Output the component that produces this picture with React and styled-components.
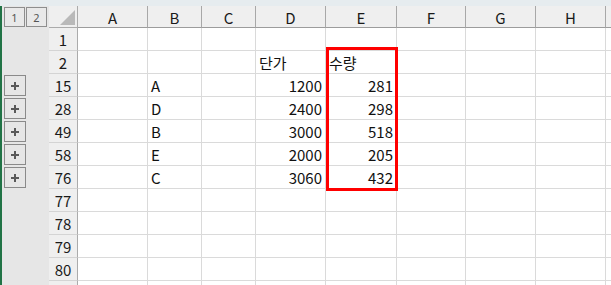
import React from "react";
import styled, { createGlobalStyle } from "styled-components";

const GlobalStyle = createGlobalStyle`
  html, body {
    margin: 0;
    padding: 0;
    background: #ffffff;
    overflow: hidden;
  }
  body {
    font-family: "Noto Sans CJK KR", "Noto Sans", sans-serif;
  }
`;

const COLS = ["A", "B", "C", "D", "E", "F", "G", "H", ""];
const WIDTHS = "29px 70px 54px 54px 70px 71px 69px 70px 70px 1fr";

// row 81 only peeks in at the bottom edge, its number is not visible
const ROWS = [
  { n: 1 },
  { n: 2, D: "단가", E: "수량" },
  { n: 15, B: "A", D: 1200, E: 281, folded: true },
  { n: 28, B: "D", D: 2400, E: 298, folded: true },
  { n: 49, B: "B", D: 3000, E: 518, folded: true },
  { n: 58, B: "E", D: 2000, E: 205, folded: true },
  { n: 76, B: "C", D: 3060, E: 432, folded: true },
  { n: 77 },
  { n: 78 },
  { n: 79 },
  { n: 80 },
  { n: 81, hidden: true },
];

const PlusIcon = () => (
  <svg width="8" height="8" viewBox="0 0 8 8">
    <path d="M4 0v8M0 4h8" stroke="#595959" strokeWidth="2" />
  </svg>
);

export default function App() {
  return (
    <>
      <GlobalStyle />
      <Window>
        <TopStrip />
        <Body>
          <Outline>
            <LevelBar>
              <LevelButton>1</LevelButton>
              <LevelButton>2</LevelButton>
            </LevelBar>
            {ROWS.map((r) => (
              <OutlineSlot key={r.n}>
                {r.folded && (
                  <ExpandButton>
                    <PlusIcon />
                  </ExpandButton>
                )}
              </OutlineSlot>
            ))}
          </Outline>
          <Sheet>
            <Grid>
              <Corner>
                <CornerMark />
              </Corner>
              {COLS.map((c, i) => (
                <ColHead key={i} $last={c === ""}>
                  {c}
                </ColHead>
              ))}
              {ROWS.map((r) => (
                <React.Fragment key={r.n}>
                  <RowHead>{r.hidden ? null : r.n}</RowHead>
                  {COLS.map((c, i) => {
                    const v = r[c];
                    return (
                      <Cell key={i} $num={typeof v === "number"}>
                        {v}
                      </Cell>
                    );
                  })}
                </React.Fragment>
              ))}
            </Grid>
            <Highlight />
          </Sheet>
        </Body>
      </Window>
    </>
  );
}

const Window = styled.div`
  width: 611px;
  height: 285px;
  display: flex;
  flex-direction: column;
  overflow: hidden;
  background: #ffffff;
`;

const TopStrip = styled.div`
  height: 6px;
  flex: none;
  background: #e6ecef;
`;

const Body = styled.div`
  display: flex;
  flex: 1;
  min-height: 0;
`;

const Outline = styled.div`
  width: 47px;
  flex: none;
  background: #e6e6e6;
  border-left: 2px solid #217346;
  display: flex;
  flex-direction: column;
`;

const LevelBar = styled.div`
  height: 22px;
  flex: none;
  display: flex;
  align-items: flex-start;
  padding: 1px 0 0 2px;
  box-sizing: border-box;
`;

const LevelButton = styled.div`
  width: 21px;
  height: 20px;
  box-sizing: border-box;
  border: 1px solid #8e8e8e;
  background: #e9e9e9;
  color: #555555;
  font-family: "Noto Sans", sans-serif;
  font-size: 11px;
  display: flex;
  align-items: center;
  justify-content: center;
  & + & {
    margin-left: 1px;
  }
`;

const OutlineSlot = styled.div`
  height: 23px;
  flex: none;
  padding: 1px 0 0 2px;
  box-sizing: border-box;
`;

const ExpandButton = styled.div`
  width: 22px;
  height: 21px;
  box-sizing: border-box;
  border: 1px solid #8a8a8a;
  background: #e6e6e6;
  display: flex;
  align-items: center;
  justify-content: center;
`;

const Sheet = styled.div`
  position: relative;
  flex: 1;
  min-width: 0;
  overflow: hidden;
`;

const Grid = styled.div`
  display: grid;
  grid-template-columns: ${WIDTHS};
  grid-auto-rows: 23px;
  grid-template-rows: 22px;
`;

const Corner = styled.div`
  position: relative;
  background: #efefef;
  border-right: 1px solid #ababab;
  border-bottom: 1px solid #ababab;
`;

const CornerMark = styled.div`
  position: absolute;
  right: 2px;
  bottom: 2px;
  width: 0;
  height: 0;
  border-style: solid;
  border-width: 0 0 15px 15px;
  border-color: transparent transparent #b9b9b9 transparent;
`;

const ColHead = styled.div`
  background: #efefef;
  border-right: 1px solid ${(p) => (p.$last ? "transparent" : "#a8a8a8")};
  border-bottom: 1px solid #9c9c9c;
  color: #1a1a1a;
  font-size: 15px;
  display: flex;
  align-items: center;
  justify-content: center;
  line-height: 1;
  padding-top: 1px;
  box-sizing: border-box;
`;

const RowHead = styled.div`
  background: #efefef;
  border-right: 1px solid #ababab;
  border-bottom: 1px solid #d4d4d4;
  color: #1a1a1a;
  font-size: 15px;
  display: flex;
  align-items: center;
  justify-content: center;
  line-height: 1;
  padding-top: 1px;
  box-sizing: border-box;
`;

const Cell = styled.div`
  border-right: 1px solid #dadada;
  border-bottom: 1px solid #dadada;
  color: #111111;
  font-size: 15px;
  line-height: 1;
  display: flex;
  align-items: flex-end;
  justify-content: ${(p) => (p.$num ? "flex-end" : "flex-start")};
  padding: 0 3px 3px 3px;
  box-sizing: border-box;
  white-space: nowrap;
`;

const Highlight = styled.div`
  position: absolute;
  left: 277px;
  top: 41px;
  width: 72px;
  height: 144px;
  box-sizing: border-box;
  border: 3px solid #ff0000;
  pointer-events: none;
`;
